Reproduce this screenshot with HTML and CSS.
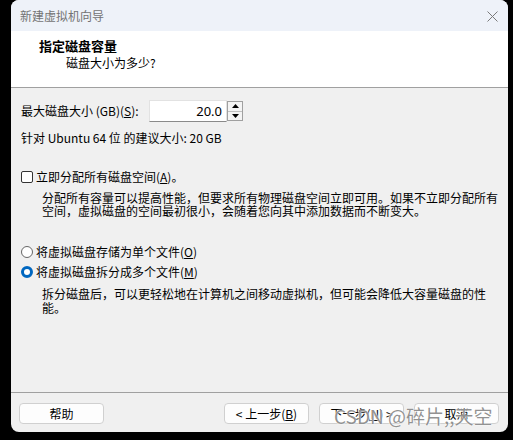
FILE: index.html
```html
<!DOCTYPE html>
<html lang="zh-CN">
<head>
<meta charset="utf-8">
<title>新建虚拟机向导</title>
<link rel="stylesheet" href="styles.css">
</head>
<body>
<div class="window">
  <div class="titlebar">
    <span class="title">新建虚拟机向导</span>
    <svg class="close" width="11" height="11" viewBox="0 0 11 11"><path d="M0.5 0.5L10.5 10.5M10.5 0.5L0.5 10.5" stroke="#7a7a7a" stroke-width="1" fill="none"/></svg>
  </div>
  <div class="header">
    <div class="h-title">指定磁盘容量</div>
    <div class="h-sub">磁盘大小为多少?</div>
  </div>
  <div class="content">
    <div class="spin-row">
      <span class="spin-label">最大磁盘大小 (GB)(<u>S</u>):</span>
      <span class="spin-input">20.0</span>
      <span class="spinner">
        <span class="sp-btn"><svg width="7" height="4" viewBox="0 0 7 4"><path d="M3.5 0L7 4H0Z" fill="#000"/></svg></span>
        <span class="sp-btn"><svg width="7" height="4" viewBox="0 0 7 4"><path d="M0 0H7L3.5 4Z" fill="#000"/></svg></span>
      </span>
    </div>
    <div class="hint">针对 Ubuntu 64 位 的建议大小: 20 GB</div>
    <div class="check-row">
      <span class="checkbox"></span>
      <span>立即分配所有磁盘空间(<u>A</u>)。</span>
    </div>
    <div class="desc desc1">分配所有容量可以提高性能，但要求所有物理磁盘空间立即可用。如果不立即分配所有空间，虚拟磁盘的空间最初很小，会随着您向其中添加数据而不断变大。</div>
    <div class="radio-row r1">
      <span class="radio"></span>
      <span>将虚拟磁盘存储为单个文件(<u>O</u>)</span>
    </div>
    <div class="radio-row r2">
      <span class="radio checked"></span>
      <span>将虚拟磁盘拆分成多个文件(<u>M</u>)</span>
    </div>
    <div class="desc desc2">拆分磁盘后，可以更轻松地在计算机之间移动虚拟机，但可能会降低大容量磁盘的性能。</div>
  </div>
  <div class="footer">
    <button class="btn">帮助</button>
    <div class="btn-group">
      <button class="btn">&lt; 上一步(<u>B</u>)</button>
      <button class="btn">下一步(<u>N</u>) &gt;</button>
      <button class="btn">取消</button>
    </div>
  </div>
  <div class="watermark">CSDN @碎片,,天空</div>
</div>
</body>
</html>
```

FILE: styles.css
```css
* { box-sizing: border-box; }
html, body {
  margin: 0;
  padding: 0;
  background: #000;
  overflow: hidden;
}
body {
  font-family: "Noto Sans CJK SC", "Noto Sans", sans-serif;
  font-size: 12px;
  color: #000;
}
.window {
  margin-left: 11px;
  width: 497px;
  height: 432px;
  background: #f0f0f0;
  border-radius: 8px;
  overflow: hidden;
  display: flex;
  flex-direction: column;
  position: relative;
}
.titlebar {
  height: 31px;
  flex: none;
  background: #eef2f9;
  display: flex;
  align-items: center;
  justify-content: space-between;
  padding: 0 10px 0 9px;
}
.title {
  color: #737373;
  font-size: 12px;
  line-height: 16px;
}
.close { display: block; margin-top: 1px; }
.header {
  height: 57px;
  flex: none;
  background: #fff;
  border-bottom: 1px solid #a0a0a0;
  padding: 7px 0 0 28px;
}
.h-title {
  font-size: 13px;
  font-weight: bold;
  line-height: 16px;
}
.h-sub {
  margin: 1px 0 0 27px;
  line-height: 16px;
}
.content {
  flex: 1;
  padding-left: 10px;
  line-height: 16px;
}
.spin-row {
  display: flex;
  align-items: flex-start;
  margin-top: 12px;
  height: 22px;
}
.spin-label {
  width: 128px;
  margin-top: 3px;
}
.spin-input {
  width: 78px;
  height: 22px;
  background: #fff;
  border: 1px solid #e2e2e2;
  border-bottom: 1px solid #8a8a8a;
  text-align: right;
  padding-right: 4px;
  line-height: 20px;
  font-family: "Noto Sans", sans-serif;
  font-size: 13px;
}
.spinner {
  width: 16px;
  height: 20px;
  margin-top: 1px;
  border: 1px solid #a0a0a0;
  background: #f0f0f0;
  display: flex;
  flex-direction: column;
}
.sp-btn {
  flex: 1;
  display: flex;
  align-items: center;
  justify-content: center;
  background: #f4f4f4;
}
.sp-btn + .sp-btn { border-top: 1px solid #c0c0c0; }
.sp-btn svg { display: block; }
.hint {
  margin-top: 8px;
}
.check-row, .radio-row {
  display: flex;
  align-items: center;
  height: 16px;
}
.check-row { margin-top: 23px; }
.checkbox {
  width: 12px;
  height: 12px;
  border: 1px solid #333;
  border-radius: 2px;
  background: #fff;
  margin-right: 3px;
}
.desc {
  margin-left: 21px;
  padding-right: 6px;
}
.desc1 {
  margin-top: 6px;
  line-height: 13px;
}
.r1 { margin-top: 27px; }
.r2 { margin-top: 4px; }
.radio {
  width: 12px;
  height: 12px;
  border: 1px solid #666;
  border-radius: 50%;
  background: #fff;
  margin-right: 3px;
  flex: none;
}
.radio.checked {
  border: 3.5px solid #0067c0;
  background: #fff;
}
.desc2 {
  margin-top: 7px;
  line-height: 14px;
}
.footer {
  flex: none;
  height: 40px;
  border-top: 1px solid #a0a0a0;
  padding: 10px 9px 0 8px;
  display: flex;
  justify-content: space-between;
  align-items: flex-start;
}
.btn-group {
  display: flex;
  gap: 10px;
}
.btn {
  width: 85px;
  height: 21px;
  padding: 0;
  background: #fdfdfd;
  border: 1px solid #d0d0d0;
  border-radius: 4px;
  font-family: "Noto Sans CJK SC", "Noto Sans", sans-serif;
  font-size: 12px;
  line-height: 18px;
  color: #000;
}
.watermark {
  position: absolute;
  left: 323px;
  top: 403px;
  font-family: "Noto Sans CJK SC", "Noto Sans", sans-serif;
  font-size: 19px;
  line-height: 26px;
  color: rgba(110, 110, 110, 0.75);
  text-shadow: 0 0 2px #fff, 0 0 1px #fff;
  white-space: nowrap;
  pointer-events: none;
}
```
